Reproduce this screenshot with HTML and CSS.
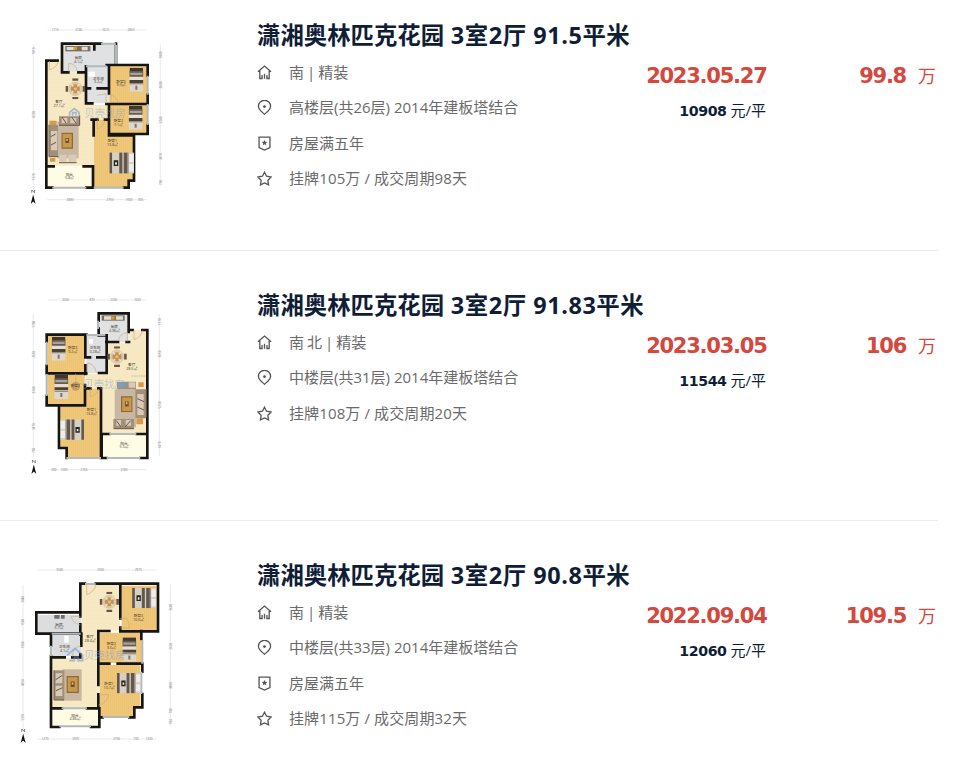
FILE: index.html
```html
<!DOCTYPE html>
<html lang="zh-CN">
<head>
<meta charset="utf-8">
<title>成交记录</title>
<link rel="stylesheet" href="styles.css">
</head>
<body>
<svg class="sprite" aria-hidden="true">
  <defs>
    <pattern id="wood" width="12" height="30" patternUnits="userSpaceOnUse"><rect width="12" height="30" fill="#f0c87c"/><path d="M1 0V30M7 0V30" stroke="#e9ba68" stroke-width="1.5"/></pattern>
    <pattern id="tile" width="12" height="12" patternUnits="userSpaceOnUse"><rect width="12" height="12" fill="#f6e9c4"/><path d="M0 0H12M0 0V12" stroke="#f1e1b6"/></pattern>
    <symbol id="home" viewBox="0 0 16 16"><path d="M1 7.2 8 1.2l7 6M3 6.2V14.4H5.4V10.6M13 6.2V14.4H10.6V10.6M8 9.4V14.6"/></symbol>
    <symbol id="pin" viewBox="0 0 16 16"><path d="M8 15.2C5 12.5 1.500 9.800 1.500 6.800a6.500 6.500 0 0 1 13 0c0 3-3.500 5.700-6.500 8.400z"/><circle class="solid" cx="8" cy="7" r="1.500"/></symbol>
    <symbol id="badge" viewBox="0 0 16 16"><path d="M2.200 1.200h11.600v11.200L8 15 2.200 12.400z"/><path class="solid" d="m8 4.300.9 1.900 2.100.2-1.600 1.400.5 2.100L8 8.900 6.100 9.900l.5-2.100L5 6.400l2.100-.2z"/></symbol>
    <symbol id="star" viewBox="0 0 16 16"><path d="m8 1.300 2.200 4.300 4.900.8-3.500 3.500.7 4.800L8 12.700l-4.300 2 .7-4.800L.9 6.400l4.900-.8z"/></symbol>
    <symbol id="bed" viewBox="0 0 42 72"><path fill="#3e3830" d="M1 0h40v12H1z"/><path fill="#655b4f" d="M0 10h42v18H0z"/><path fill="#a9a39b" d="M3 15h36v7H3z"/><path fill="#e5ded4" d="M0 27h42v10H0z"/><path fill="#4b4037" d="M0 37h42v9H0z"/><path fill="#ded7cd" d="M0 46h42v26H0z"/><path fill="#807569" d="M0 47h42v3H0zM18 54h6v12h-6z"/></symbol>
    <symbol id="doublebed" viewBox="0 0 72 62"><path fill="#d8d0c3" d="M0 0h72v62H0z"/><path fill="#62584d" d="M0 0h8v62H0zM29 0h9v62h-9zM42 0h11v62H42z"/><path fill="#8d8274" d="M53 0h3v62h-3z"/><path fill="#242321" d="M13 23h13v17H13z"/><path fill="#eee" d="M17 29h5v7h-5zM58 5h13v23H58zM58 34h13v22H58z"/></symbol>
    <symbol id="dining" viewBox="0 0 60 64"><path fill="#655345" d="M21 0h18v7H21zM21 57h18v7H21zM0 23h8v18H0zM52 23h8v18h-8z"/><circle cx="30" cy="32" r="22" fill="#dcc8a2"/><circle cx="30" cy="32" r="14" fill="#c68f5a"/><path stroke="#eadfc5" stroke-width="5" d="M17 17 24 25M43 17 36 25M17 47 24 39M43 47 36 39"/><circle cx="30" cy="32" r="5" fill="#e1bd79"/></symbol>
    <symbol id="table" viewBox="0 0 38 52"><path fill="#956728" d="M0 0h38v52H0z"/><path fill="#c69952" d="M4 4h30v44H4z"/><path fill="#765020" d="M13 17h12v17H13z"/><path fill="#e8ca86" d="M16 20h5v6h-5z"/></symbol>
    <symbol id="north" viewBox="0 0 16 40"><path d="M4 8V0L12 8V0" fill="none" stroke="#555" stroke-width="2"/><path fill="#111" d="M8 13 15 40 8 33 1 40z"/></symbol>
  </defs>
</svg>

<main class="list">
  <article class="item">
    <div class="thumb">
      <svg class="plan" viewBox="0 0 480 600">
        <path class="dim" d="M97 45H396M55 88V516M436 88V512M97 554H396"/>
        <g class="measure"><text x="120" y="49">1110</text><text x="191" y="49">2740</text><text x="271" y="49">1610</text><text x="348" y="49">2850</text><text x="165" y="558">3880</text><text x="285" y="558">2750</text><text x="342" y="558">1000</text><text x="377" y="558">900</text></g>
        <g class="measure"><text transform="translate(59 108)rotate(-90)">1810</text><text transform="translate(59 298)rotate(-90)">8220</text><text transform="translate(59 486)rotate(-90)">1370</text><text transform="translate(440 120)rotate(-90)">1800</text><text transform="translate(440 210)rotate(-90)">2600</text><text transform="translate(440 315)rotate(-90)">2240</text><text transform="translate(440 425)rotate(-90)">3470</text><text transform="translate(440 502)rotate(-90)">700</text></g>
        <path fill="#e0e1e2" d="M141 86H303V150H282V265H215V170H141z"/>
        <path fill="url(#tile)" d="M96 137H144V172H214V265H235V452H96z"/>
        <path fill="url(#tile)" d="M214 270H282V314H214z"/>
        <path fill="url(#wood)" d="M283 154H396V265H283zM283 270H396V356H283zM236 314H282V361H357V497H341V516H236z"/>
        <path fill="#fffce6" d="M96 455H232V516H96z"/>
        <path class="wall" d="M141 170V86H258M238 86V103M303 86V150H275M94 165V137H128M94 137V518H112M213 172H190M160 172H141M213 154V265H232M214 220H225M248 220H282M282 150V235M302 150H398V182M274 267H398M398 239V267M282 267V357H398V330M230 314H247M236 314V361M270 314H282M282 361H357V497H341V518H327M94 454H116M206 454H234V518H214"/>
        <path class="window" d="M258 86H303M303 90V146M398 182V239M398 267V330M112 518H214M236 518H326M213 154H275"/>
        <path class="door" d="M103 138V165Q125 158 130 139M161 169V145Q183 146 187 169M246 241L273 236V265M287 264V240Q305 245 310 263M247 314V342Q266 335 270 316"/>
        <use href="#bed" x="343" y="158" width="42" height="72"/><use href="#bed" x="341" y="272" width="42" height="72"/><use href="#doublebed" x="283" y="412" width="74" height="64"/><use href="#dining" x="151" y="190" width="60" height="63"/>
        <path fill="#c8b8a3" d="M127 320H191V430H127z"/><path fill="#a18f79" d="M103 330H129V425H103zM132 304H195V330H132z"/><path fill="#d8cab7" d="M108 348H127V406H108zM140 309H157V325H140zM166 309H184V325H166zM133 419H155V440H133zM160 419H184V440H160z"/>
        <path stroke="#65564a" stroke-width="3" fill="none" d="M102 329V425H130M132 331H194V302M132 443H185M107 365L122 357M108 390L123 382M141 306L154 326M170 306L184 326"/>
        <use href="#table" x="139" y="352" width="35" height="50"/><path fill="#d59b49" d="M103 317H125V330H103zM105 429H121V440H105z"/>
        <path fill="#766d60" d="M151 93H226V109H151z"/><path fill="#e2dfd0" d="M155 96H180V105H155zM200 95H218V106H200z"/><path fill="#db9c20" d="M175 95H186V104H175z"/><path fill="#fff" d="M220 170H240V185H220z"/>
        <g class="room"><text x="190" y="132">厨房</text><text x="190" y="143">4.1㎡</text><text x="250" y="194">卫生间</text><text x="250" y="205">3.2㎡</text><text x="318" y="203">卧室3</text><text x="318" y="214">9.0㎡</text><text x="310" y="322">卧室2</text><text x="310" y="333">7.1㎡</text><text x="292" y="382">卧室1</text><text x="292" y="393">13.8㎡</text><text x="132" y="265">客厅</text><text x="132" y="276">27.1㎡</text><text x="163" y="482">阳台</text><text x="163" y="493">5.8㎡</text></g>
        <path class="logo" d="M164 302V292L178 281L192 292V302M173 302V293H183V302"/><text class="watermark" x="208" y="306">贝壳找房</text><use href="#north" x="46" y="525" width="17" height="42"/>
      </svg>
    </div>
    <div class="info"><h2>潇湘奥林匹克花园<span> 3室2厅 91.5平米</span></h2>
      <ul><li class="facing"><svg class="icon"><use href="#home"/></svg>南 | 精装</li><li><svg class="icon"><use href="#pin"/></svg>高楼层(共26层) 2014年建板塔结合</li><li class="years"><svg class="icon"><use href="#badge"/></svg>房屋满五年</li><li class="listed"><svg class="icon"><use href="#star"/></svg>挂牌105万 / 成交周期98天</li></ul></div>
    <div class="deal"><div class="date">2023.05.27</div><div class="unit"><b>10908</b> 元/平</div></div>
    <div class="price"><b>99.8</b><span>万</span></div>
  </article>

  <article class="item">
    <div class="thumb">
      <svg class="plan" viewBox="0 0 480 600">
        <path class="dim" d="M98 45H393M55 88V514M433 88V513M98 554H393"/>
        <g class="measure"><text x="152" y="49">3050</text><text x="231" y="49">870</text><text x="296" y="49">2250</text><text x="367" y="49">1600</text><text x="117" y="558">900</text><text x="147" y="558">1000</text><text x="207" y="558">2760</text><text x="327" y="558">3780</text></g>
        <g class="measure"><text transform="translate(59 118)rotate(-90)">1700</text><text transform="translate(59 208)rotate(-90)">2650</text><text transform="translate(59 315)rotate(-90)">2240</text><text transform="translate(59 425)rotate(-90)">3470</text><text transform="translate(59 496)rotate(-90)">700</text><text transform="translate(437 110)rotate(-90)">1370</text><text transform="translate(437 207)rotate(-90)">3650</text><text transform="translate(437 360)rotate(-90)">5230</text><text transform="translate(437 480)rotate(-90)">1470</text></g>
        <path fill="#e0e1e2" d="M251 86H341V171H275V265H214V152H251z"/><path fill="url(#tile)" d="M275 173H343V136H396V446H260V310H214V267H275z"/><path fill="url(#wood)" d="M98 150H209V263H98zM98 268H209V357H98zM136 364H212V312H258V516H153V489H136z"/><path fill="#fffce6" d="M262 450H394V516H262z"/>
        <path class="wall" d="M251 107V85H341V141M251 131V151H274M274 171H309M335 171H342M343 135H353M382 135H397V519H376M397 447H365M275 151V264H252M260 447V519H274M95 170V149H214M211 149V217H225M247 217H272M95 242V265H214M211 241V267M95 333V361H210V300M132 361V489H155V519M211 310H226M250 310H258V519M258 447H283"/>
        <path class="window" d="M249 107V132M95 170V241M95 267V333M214 150H271M154 519H258M275 519H376M283 447H364"/>
        <path class="door" d="M357 134V164Q378 158 383 136M310 168Q312 146 337 143V170M218 263V234Q240 238 244 263M182 266V291Q199 296 209 300M226 312V336Q246 329 250 312"/>
        <use href="#bed" x="110" y="155" width="42" height="72"/><use href="#bed" x="118" y="270" width="42" height="72"/><g transform="translate(207 402)scale(-1 1)"><use href="#doublebed" width="71" height="64"/></g><use href="#dining" x="276" y="184" width="60" height="62"/>
        <path fill="#c8b8a3" d="M299 313H363V427H299z"/><path fill="#a18f79" d="M361 313H393V400H361zM306 290H363V313H306zM295 402H357V431H295z"/><path fill="#d8cab7" d="M367 327H386V390H367zM341 292H361V308H341zM304 405H318V422H304zM332 405H348V422H332z"/><path fill="#8698ac" d="M309 292H336V310H309z"/><path stroke="#65564a" stroke-width="3" fill="none" d="M394 312V397M367 341L387 350M367 366L387 375M296 431H357M304 407L318 426M330 426L347 407"/>
        <use href="#table" x="318" y="333" width="35" height="49"/><path fill="#d59b49" d="M370 292H386V306H370zM364 400H384V418H364z"/><circle cx="182" cy="304" r="13" fill="#c09c69"/><path fill="#766d60" d="M260 91H329V107H260z"/><path fill="#e3dfcf" d="M267 94H289V104H267zM303 94H324V104H303z"/><path fill="#d69c24" d="M289 94H299V104H289z"/><path fill="#fff" d="M222 162H234V176H222z"/>
        <g class="room"><text x="298" y="130">厨房</text><text x="298" y="141">4.96㎡</text><text x="240" y="192">卫生间</text><text x="240" y="203">3.28㎡</text><text x="173" y="193">卧室3</text><text x="173" y="204">9.2㎡</text><text x="181" y="307">卧室2</text><text x="229" y="379">卧室1</text><text x="229" y="390">13.8㎡</text><text x="350" y="244">客厅</text><text x="350" y="255">28.5㎡</text><text x="327" y="479">阳台</text><text x="327" y="490">5.5㎡</text></g>
        <text class="watermark" x="205" y="309">贝壳找房</text><path d="M350 273H393" stroke="#b8a783" stroke-width="2" stroke-dasharray="5 2"/><use href="#north" x="48" y="525" width="17" height="42"/>
      </svg>
    </div>
    <div class="info"><h2>潇湘奥林匹克花园<span> 3室2厅 91.83平米</span></h2>
      <ul><li class="facing"><svg class="icon"><use href="#home"/></svg>南 北 | 精装</li><li><svg class="icon"><use href="#pin"/></svg>中楼层(共31层) 2014年建板塔结合</li><li class="listed years"><svg class="icon"><use href="#star"/></svg>挂牌108万 / 成交周期20天</li></ul></div>
    <div class="deal"><div class="date">2023.03.05</div><div class="unit"><b>11544</b> 元/平</div></div>
    <div class="price"><b>106</b><span>万</span></div>
  </article>

  <article class="item">
    <div class="thumb wide">
      <svg class="plan" viewBox="0 0 540 600">
        <path class="dim" d="M83 45H440M39 89V530M481 89V514M83 552H440"/>
        <g class="measure"><text x="149" y="49">3580</text><text x="272" y="49">3350</text><text x="385" y="49">2970</text><text x="105" y="556">1270</text><text x="197" y="556">3970</text><text x="320" y="556">2750</text><text x="378" y="556">700</text><text x="417" y="556">1200</text></g>
        <g class="measure"><text transform="translate(43 133)rotate(-90)">2440</text><text transform="translate(43 202)rotate(-90)">1500</text><text transform="translate(43 270)rotate(-90)">1900</text><text transform="translate(43 383)rotate(-90)">4050</text><text transform="translate(43 487)rotate(-90)">1370</text><text transform="translate(485 157)rotate(-90)">3600</text><text transform="translate(485 274)rotate(-90)">2620</text><text transform="translate(485 392)rotate(-90)">3800</text><text transform="translate(485 468)rotate(-90)">700</text><text transform="translate(485 500)rotate(-90)">700</text></g>
        <path fill="#dcddde" d="M84 180H214V235H84zM127 238H213V303H127z"/><path fill="url(#tile)" d="M216 88H330V226H266V458H126V309H214V238H216z"/><path fill="url(#wood)" d="M335 92H440V227H335zM269 233H396V324H269zM269 330H391V456H370V486H269z"/><path fill="#fffce6" d="M129 463H267V512H129z"/>
        <path class="wall" d="M225 86H211V172H79V236H210M211 160V184M211 208V238M257 86H444V229H335M331 88V190M331 218V229M123 236V272M123 303V516H148M123 307H164M187 307H211V298M214 236V272M265 228H298M265 228V390M265 326H298M323 326H397V350M394 228V252M397 417V457H373V487H358M265 418V460H231M126 460H156M268 460V516H243M268 487H278"/>
        <path class="window" d="M225 87H257M123 272V303M125 236H212M397 255V326M394 350V417M148 514H243M278 486H358M155 460H231"/>
        <path class="door" d="M230 87V119Q252 112 258 89M211 184H184Q186 203 211 210M329 190H351Q358 203 359 219H331M187 305Q190 276 212 272M267 419H297Q290 445 266 450"/>
        <use href="#dining" x="268" y="110" width="60" height="61"/><use href="#doublebed" x="366" y="98" width="73" height="62"/><use href="#bed" x="337" y="247" width="42" height="73"/><use href="#doublebed" x="321" y="353" width="71" height="63"/>
        <path fill="#c8b8a3" d="M157 343H215V437H157z"/><path fill="#a18f79" d="M132 346H163V435H132z"/><path fill="#d8cab7" d="M137 355H157V385H137zM137 392H157V423H137z"/><path stroke="#66584c" stroke-width="3" fill="none" d="M132 346V435H162M137 374L157 361M138 407L158 398"/><use href="#table" x="169" y="363" width="38" height="51"/>
        <path fill="#6e706e" d="M133 180H149V191H133zM153 180H164V191H153z"/><path fill="#fff" d="M163 242H176V263H163z"/>
        <g class="room"><text x="147" y="212">厨房</text><text x="147" y="223">5.7㎡</text><text x="163" y="280">卫生间</text><text x="163" y="291">4.1㎡</text><text x="240" y="250">客厅</text><text x="240" y="261">28.4㎡</text><text x="385" y="187">卧室3</text><text x="385" y="198">10.0㎡</text><text x="304" y="270">卧室2</text><text x="304" y="281">9.0㎡</text><text x="297" y="390">卧室1</text><text x="297" y="401">13.7㎡</text><text x="195" y="485">阳台</text><text x="195" y="496">4.86㎡</text></g>
        <path class="logo" d="M171 301L195 280L218 301V317H204V306H193V317H178"/><text class="watermark blue" x="222" y="313">贝壳找房</text><use href="#north" x="31" y="522" width="17" height="42"/>
      </svg>
    </div>
    <div class="info"><h2>潇湘奥林匹克花园<span> 3室2厅 90.8平米</span></h2>
      <ul><li class="facing"><svg class="icon"><use href="#home"/></svg>南 | 精装</li><li><svg class="icon"><use href="#pin"/></svg>中楼层(共33层) 2014年建板塔结合</li><li class="years"><svg class="icon"><use href="#badge"/></svg>房屋满五年</li><li class="listed"><svg class="icon"><use href="#star"/></svg>挂牌115万 / 成交周期32天</li></ul></div>
    <div class="deal"><div class="date">2022.09.04</div><div class="unit"><b>12060</b> 元/平</div></div>
    <div class="price"><b>109.5</b><span>万</span></div>
  </article>
</main>
</body>
</html>
```
FILE: styles.css
```css
* { box-sizing: border-box; }
body { margin: 0; height: 769px; overflow: hidden; background: #fff; font-family: "Open Sans", "Noto Sans CJK SC", sans-serif; }
.sprite { display: block; width: 0; height: 0; }
.list { width: 938px; }
.item { display: grid; grid-template-columns: 257px 352px 157px 172px; height: 270px; padding-top: 34px; border-bottom: 1px solid #ececec; }
.item:first-child { height: 251px; padding-top: 15px; }
.item:last-child { border-bottom: 0; height: 248px; }
.thumb { padding-left: 15px; }
.thumb.wide { padding-left: 10px; }
.plan { display: block; width: 160px; height: 200px; }
.wide .plan { width: 180px; }
.info h2 { margin: 0; height: 40px; font-size: 23.4px; line-height: 40px; font-weight: 700; color: #101d37; white-space: nowrap; }
.info h2 span { letter-spacing: .58px; }
.info ul { list-style: none; margin: 0; padding: 0; }
.info li { display: flex; align-items: center; gap: 17px; height: 35px; font-size: 15px; line-height: 35px; color: #6a6a6a; white-space: nowrap; }
.info .facing { word-spacing: -.8px; letter-spacing: -.05px; }
.info .years { height: 37px; line-height: 37px; }
.info .years + li { height: 32px; line-height: 32px; }
.info .listed { letter-spacing: .12px; }
.icon { width: 15px; height: 15px; flex: none; fill: none; stroke: #555; stroke-width: 1.4; }
.solid { fill: #555; stroke: none; }
.deal, .price { color: #d4483d; text-align: right; white-space: nowrap; }
.deal { padding-top: 44px; }
.date, .price b { font-family: "DejaVu Sans", sans-serif; font-size: 21px; font-weight: 700; letter-spacing: -1.25px; }
.date { line-height: 34px; margin-right: -.5px; }
.unit { font-size: 15px; line-height: 34px; color: #101d37; }
.unit b { font-family: "DejaVu Sans", sans-serif; font-size: 14.2px; letter-spacing: -.4px; }
.price { display: flex; justify-content: flex-end; align-items: baseline; gap: 12px; padding: 44px 2px 0 0; line-height: 34px; }
.price span { font-size: 18px; }
.wall { fill: none; stroke: #171512; stroke-width: 8; stroke-linecap: square; }
.window { fill: none; stroke: #b4b8bb; stroke-width: 6; }
.door { fill: none; stroke: #c6ad7c; stroke-width: 2; }
.dim { fill: none; stroke: #dedede; stroke-width: 2; }
.measure { fill: #777; font-size: 9px; text-anchor: middle; }
.room { fill: #42372d; font-size: 11px; text-anchor: middle; }
.watermark { fill: #8ba5c5; fill-opacity: .5; font-size: 31px; }
.watermark.blue { fill: #7899dd; }
.logo { fill: none; stroke: #6f94d5; stroke-width: 5; opacity: .6; }
```
